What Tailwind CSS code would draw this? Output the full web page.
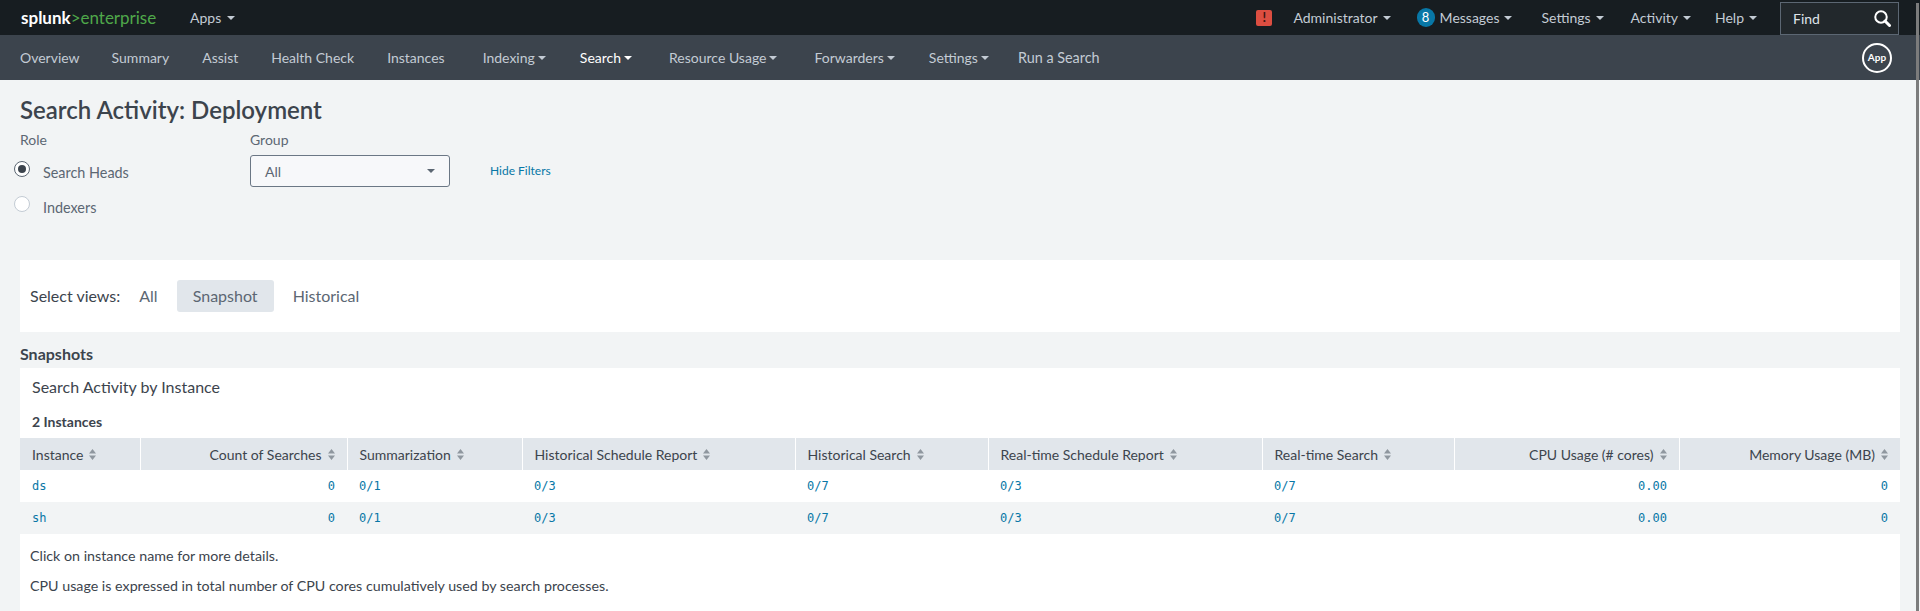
<!DOCTYPE html>
<html>
<head>
<meta charset="utf-8">
<script src="https://cdn.jsdelivr.net/npm/@tailwindcss/browser@4"></script>
<title>Search Activity: Deployment</title>
</head>
<body class="h-[611px] w-[1920px] overflow-hidden bg-[#f2f4f5] font-['Lato','Liberation_Sans',sans-serif] text-[14px] text-[#3c444d]">
<div class="relative flex h-full flex-col">
  <div class="absolute right-[1px] top-[3px] h-[608px] w-[3px] bg-[#7c7c7c]"></div>

  <header class="flex h-[35px] w-[1920px] items-center bg-[#171d21] text-[#c3cbd4]">
    <div class="ml-[21px] flex w-[136px] items-baseline text-[17px] leading-none">
      <span class="font-bold text-white">splunk</span><span class="text-[#4fa84a]">&gt;enterprise</span>
    </div>
    <div class="ml-[33px] flex items-center gap-[6px]">Apps<span class="h-0 w-0 border-x-[4px] border-t-[4px] border-x-transparent border-t-[#c3cbd4]"></span></div>
    <div class="ml-auto flex h-full items-center">
      <div class="flex h-[16px] w-[16px] items-center justify-center rounded-[2px] bg-[#dc4e41] text-[13px] font-bold text-[#3c1512]">!</div>
      <div class="ml-[21px] flex items-center gap-[5px]">Administrator<span class="h-0 w-0 border-x-[4px] border-t-[4px] border-x-transparent border-t-[#c3cbd4]"></span></div>
      <div class="ml-[26px] flex h-[19px] w-[18px] items-center justify-center rounded-full bg-[#0877a6] text-[13px] text-white">8</div>
      <div class="ml-[5px] flex items-center gap-[5px]">Messages<span class="h-0 w-0 border-x-[4px] border-t-[4px] border-x-transparent border-t-[#c3cbd4]"></span></div>
      <div class="ml-[29px] flex items-center gap-[5px]">Settings<span class="h-0 w-0 border-x-[4px] border-t-[4px] border-x-transparent border-t-[#c3cbd4]"></span></div>
      <div class="ml-[27px] flex items-center gap-[5px]">Activity<span class="h-0 w-0 border-x-[4px] border-t-[4px] border-x-transparent border-t-[#c3cbd4]"></span></div>
      <div class="ml-[24px] flex items-center gap-[5px]">Help<span class="h-0 w-0 border-x-[4px] border-t-[4px] border-x-transparent border-t-[#c3cbd4]"></span></div>
      <div class="ml-[23px] mr-[21px] mt-[2px] flex h-[33px] w-[119px] items-center justify-between border border-[#5c6773] bg-[#22282c] pl-[12px] pr-[7px] text-[#dfe4ea]">Find
        <svg width="17" height="17" viewBox="0 0 17 17" fill="none" stroke="white"><circle cx="7" cy="7" r="5.75" stroke-width="2"/><path d="M11 11l4.5 4.5" stroke-width="3" stroke-linecap="round"/></svg>
      </div>
    </div>
  </header>

  <nav class="flex h-[45px] w-[1920px] items-center bg-[#3c444d] text-[#c3cbd4]">
    <span class="ml-[20px]">Overview</span>
    <span class="ml-[32px]">Summary</span>
    <span class="ml-[33px]">Assist</span>
    <span class="ml-[33px]">Health Check</span>
    <span class="ml-[33px]">Instances</span>
    <span class="ml-[38px] flex items-center gap-[3px]">Indexing<span class="h-0 w-0 border-x-[4px] border-t-[4px] border-x-transparent border-t-[#c3cbd4]"></span></span>
    <span class="ml-[34px] flex items-center gap-[3px] text-white">Search<span class="h-0 w-0 border-x-[4px] border-t-[4px] border-x-transparent border-t-white"></span></span>
    <span class="ml-[37px] flex items-center gap-[3px]">Resource Usage<span class="h-0 w-0 border-x-[4px] border-t-[4px] border-x-transparent border-t-[#c3cbd4]"></span></span>
    <span class="ml-[37px] flex items-center gap-[3px]">Forwarders<span class="h-0 w-0 border-x-[4px] border-t-[4px] border-x-transparent border-t-[#c3cbd4]"></span></span>
    <span class="ml-[34px] flex items-center gap-[3px]">Settings<span class="h-0 w-0 border-x-[4px] border-t-[4px] border-x-transparent border-t-[#c3cbd4]"></span></span>
    <span class="ml-[29px] text-[14.4px]">Run a Search</span>
    <div class="ml-auto mr-[28px] flex h-[30px] w-[30px] items-center justify-center rounded-full border-2 border-white text-[10px] font-bold text-white">App</div>
  </nav>

  <main class="flex min-h-0 flex-1 flex-col px-[20px]">
    <h1 class="mt-[15px] text-[24px] font-semibold leading-[29px]">Search Activity: Deployment</h1>
    <div class="mt-[6px] flex h-[130px]">
      <div class="w-[230px]">
        <div class="leading-[20px] text-[#5c6773]">Role</div>
        <div class="mt-[13px] ml-[-6px] flex h-[35px] items-start gap-[13px]">
          <span class="mt-[-2px] flex h-[16px] w-[16px] items-center justify-center rounded-full border border-[#5c6773] bg-white"><span class="h-[8px] w-[8px] rounded-full bg-[#3c444d]"></span></span>
          <span class="text-[14.4px] leading-[20px] text-[#5c6773]">Search Heads</span>
        </div>
        <div class="ml-[-6px] flex items-start gap-[13px]">
          <span class="mt-[-2px] h-[16px] w-[16px] rounded-full border border-[#c3cbd4] bg-white"></span>
          <span class="text-[14.4px] leading-[20px] text-[#5c6773]">Indexers</span>
        </div>
      </div>
      <div class="w-[200px]">
        <div class="leading-[20px] text-[#5c6773]">Group</div>
        <div class="mt-[5px] flex h-[32px] w-[200px] items-center justify-between rounded-[3px] border border-[#6b7785] bg-[#f7f8fa] px-[14px] text-[#5c6773]">All<span class="h-0 w-0 border-x-[4px] border-t-[4px] border-x-transparent border-t-[#5c6773]"></span></div>
      </div>
      <a class="ml-[40px] mt-[33px] h-[16px] text-[12px] leading-[16px] text-[#0877a6]">Hide Filters</a>
    </div>

    <section class="flex h-[72px] w-[1880px] items-center bg-white pl-[10px] text-[16px]">
      <span>Select views:</span>
      <span class="ml-[19px] text-[#5c6773]">All</span>
      <span class="ml-[19px] flex h-[32px] w-[97px] items-center justify-center rounded-[3px] bg-[#e1e6eb] text-[#5c6773]">Snapshot</span>
      <span class="ml-[19px] text-[#5c6773]">Historical</span>
    </section>

    <h2 class="mt-[12px] text-[16px] font-bold leading-[20px]">Snapshots</h2>
    <section class="mt-[4px] w-[1880px] flex-1 bg-white">
      <h3 class="pl-[12px] pt-[9px] text-[16px] leading-[20px]">Search Activity by Instance</h3>
      <div class="mt-[16px] pl-[12px] text-[14px] font-bold leading-[17px]">2 Instances</div>
      <table class="mt-[8px] w-[1880px] table-fixed border-collapse">
        <colgroup>
          <col class="w-[120px]"><col class="w-[207px]"><col class="w-[175px]"><col class="w-[273px]"><col class="w-[193px]"><col class="w-[274px]"><col class="w-[192px]"><col class="w-[225px]"><col class="w-[221px]">
        </colgroup>
        <thead class="bg-[#e1e6eb] text-[14px] font-normal">
          <tr class="h-[32px]">
            <th class="px-[12px] text-left font-normal"><span class="inline-flex items-center gap-[6px]">Instance<svg width="7" height="11" viewBox="0 0 7 11" fill="#8f979f"><path d="M3.5 0l3.5 4.5H0zM3.5 11L0 6.5h7z"/></svg></span></th>
            <th class="border-l border-white px-[12px] text-right font-normal"><span class="inline-flex items-center gap-[6px]">Count of Searches<svg width="7" height="11" viewBox="0 0 7 11" fill="#8f979f"><path d="M3.5 0l3.5 4.5H0zM3.5 11L0 6.5h7z"/></svg></span></th>
            <th class="border-l border-white px-[12px] text-left font-normal"><span class="inline-flex items-center gap-[6px]">Summarization<svg width="7" height="11" viewBox="0 0 7 11" fill="#8f979f"><path d="M3.5 0l3.5 4.5H0zM3.5 11L0 6.5h7z"/></svg></span></th>
            <th class="border-l border-white px-[12px] text-left font-normal"><span class="inline-flex items-center gap-[6px]">Historical Schedule Report<svg width="7" height="11" viewBox="0 0 7 11" fill="#8f979f"><path d="M3.5 0l3.5 4.5H0zM3.5 11L0 6.5h7z"/></svg></span></th>
            <th class="border-l border-white px-[12px] text-left font-normal"><span class="inline-flex items-center gap-[6px]">Historical Search<svg width="7" height="11" viewBox="0 0 7 11" fill="#8f979f"><path d="M3.5 0l3.5 4.5H0zM3.5 11L0 6.5h7z"/></svg></span></th>
            <th class="border-l border-white px-[12px] text-left font-normal"><span class="inline-flex items-center gap-[6px]">Real-time Schedule Report<svg width="7" height="11" viewBox="0 0 7 11" fill="#8f979f"><path d="M3.5 0l3.5 4.5H0zM3.5 11L0 6.5h7z"/></svg></span></th>
            <th class="border-l border-white px-[12px] text-left font-normal"><span class="inline-flex items-center gap-[6px]">Real-time Search<svg width="7" height="11" viewBox="0 0 7 11" fill="#8f979f"><path d="M3.5 0l3.5 4.5H0zM3.5 11L0 6.5h7z"/></svg></span></th>
            <th class="border-l border-white px-[12px] text-right font-normal"><span class="inline-flex items-center gap-[6px]">CPU Usage (# cores)<svg width="7" height="11" viewBox="0 0 7 11" fill="#8f979f"><path d="M3.5 0l3.5 4.5H0zM3.5 11L0 6.5h7z"/></svg></span></th>
            <th class="border-l border-white px-[12px] text-right font-normal"><span class="inline-flex items-center gap-[6px]">Memory Usage (MB)<svg width="7" height="11" viewBox="0 0 7 11" fill="#8f979f"><path d="M3.5 0l3.5 4.5H0zM3.5 11L0 6.5h7z"/></svg></span></th>
          </tr>
        </thead>
        <tbody class="font-['DejaVu_Sans_Mono','Liberation_Mono',monospace] text-[12px] text-[#0877a6]">
          <tr class="h-[32px]">
            <td class="px-[12px]">ds</td><td class="px-[12px] text-right">0</td><td class="px-[12px]">0/1</td><td class="px-[12px]">0/3</td><td class="px-[12px]">0/7</td><td class="px-[12px]">0/3</td><td class="px-[12px]">0/7</td><td class="px-[12px] text-right">0.00</td><td class="px-[12px] text-right">0</td>
          </tr>
          <tr class="h-[32px] bg-[#f2f4f5]">
            <td class="px-[12px]">sh</td><td class="px-[12px] text-right">0</td><td class="px-[12px]">0/1</td><td class="px-[12px]">0/3</td><td class="px-[12px]">0/7</td><td class="px-[12px]">0/3</td><td class="px-[12px]">0/7</td><td class="px-[12px] text-right">0.00</td><td class="px-[12px] text-right">0</td>
          </tr>
        </tbody>
      </table>
      <p class="mt-[13px] pl-[10px] text-[14.25px] leading-[17px]">Click on instance name for more details.</p>
      <p class="mt-[13px] pl-[10px] text-[14.25px] leading-[17px]">CPU usage is expressed in total number of CPU cores cumulatively used by search processes.</p>
    </section>
  </main>
</div>
</body>
</html>
